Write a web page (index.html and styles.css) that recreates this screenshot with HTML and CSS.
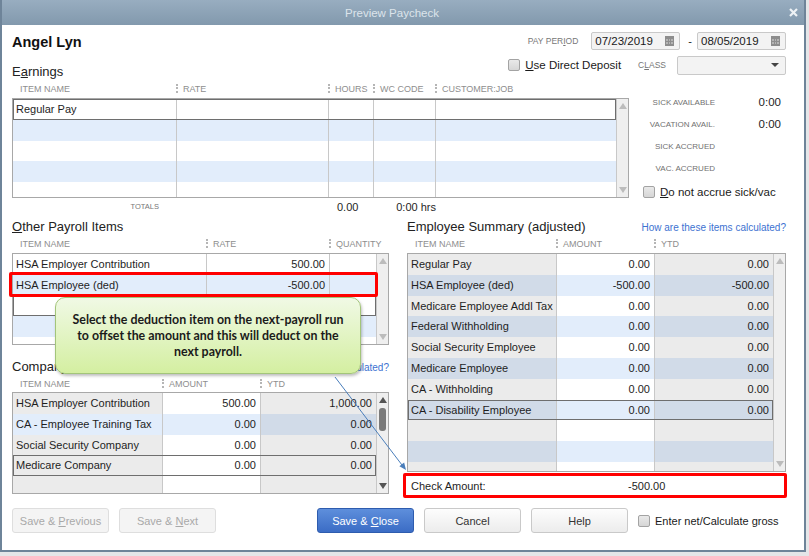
FILE: index.html
```html
<!DOCTYPE html>
<html lang="en">

<head>
  <meta charset="UTF-8" />
  <meta name="viewport" content="width=device-width, initial-scale=1.0" />
  <title>Preview Paycheck</title>
  <link rel="stylesheet" href="styles.css">
</head>

<body>
  <div class="window">
    <div class="titlebar">
      <span class="title">Preview Paycheck</span>
      <span class="close">
        <svg width="9" height="9" viewBox="0 0 9 9"><path d="M1 1L8 8M8 1L1 8" stroke="#eef2f5" stroke-width="2.2" /></svg>
      </span>
    </div>

    <div class="content">
      <div class="top">
        <div class="top-left">
          <div class="name">Angel Lyn</div>
          <div class="section-title">E<u>a</u>rnings</div>
        </div>
        <div class="top-right">
          <div class="period-row">
            <span class="label period-label">PAY PER<u>I</u>OD</span>
            <span class="date">07/23/2019
              <svg class="cal" width="9" height="10" viewBox="0 0 9 10"><rect width="9" height="10" fill="#8d8d8d" /><path d="M1 3h2v2H1zM4 3h1v2H4zM6 3h2v2H6zM1 6h2v2H1zM4 6h1v2H4zM6 6h2v2H6z" fill="#b4b4b4" /></svg>
            </span>
            <span class="dash">-</span>
            <span class="date">08/05/2019
              <svg class="cal" width="9" height="10" viewBox="0 0 9 10"><rect width="9" height="10" fill="#8d8d8d" /><path d="M1 3h2v2H1zM4 3h1v2H4zM6 3h2v2H6zM1 6h2v2H1zM4 6h1v2H4zM6 6h2v2H6z" fill="#b4b4b4" /></svg>
            </span>
          </div>
          <div class="deposit-row">
            <span class="check"><i class="box"></i><span><u>U</u>se Direct Deposit</span></span>
            <span class="label class-label">C<u>L</u>ASS</span>
            <span class="select"><i class="caret"></i></span>
          </div>
        </div>
      </div>

      <div class="earnings">
        <div>
          <div class="heads earn-cols">
            <span>ITEM NAME</span><span>RATE</span><span>HOURS</span><span>WC CODE</span><span>CUSTOMER:JOB</span>
          </div>
          <div class="table earn-table">
            <div class="rows">
              <div class="row earn-cols sel"><span>Regular Pay</span><span></span><span></span><span></span><span></span></div>
              <div class="row earn-cols alt"><span></span><span></span><span></span><span></span><span></span></div>
              <div class="row earn-cols"><span></span><span></span><span></span><span></span><span></span></div>
              <div class="row earn-cols alt"><span></span><span></span><span></span><span></span><span></span></div>
              <div class="row earn-cols"><span></span><span></span><span></span><span></span><span></span></div>
            </div>
            <div class="scroll"><i class="up"></i><i class="down"></i></div>
          </div>
          <div class="totals earn-cols">
            <span class="totals-label">TOTALS</span><span></span><span class="total-hours">0.00</span><span class="total-time">0:00 hrs</span><span></span>
          </div>
        </div>

        <div class="accrual">
          <div class="accrual-row"><span class="label">SICK AVAILABLE</span><span class="value">0:00</span></div>
          <div class="accrual-row"><span class="label">VACATION AVAIL.</span><span class="value">0:00</span></div>
          <div class="accrual-row"><span class="label">SICK ACCRUED</span><span class="value"></span></div>
          <div class="accrual-row"><span class="label">VAC. ACCRUED</span><span class="value"></span></div>
          <span class="check accrue"><i class="box"></i><span><u>D</u>o not accrue sick/vac</span></span>
        </div>
      </div>

      <div class="middle">
        <div>
          <div class="panel other">
            <div class="panel-title"><span class="section-title"><u>O</u>ther Payroll Items</span></div>
            <div class="heads other-cols">
              <span>ITEM NAME</span><span>RATE</span><span>QUANTITY</span>
            </div>
            <div class="table other-table">
              <div class="rows">
                <div class="row other-cols"><span>HSA Employer Contribution</span><span class="num">500.00</span><span></span></div>
                <div class="row other-cols alt"><span>HSA Employee (ded)</span><span class="num">-500.00</span><span></span></div>
                <div class="row other-cols sel"><span></span><span></span><span></span></div>
                <div class="row other-cols alt"><span></span><span></span><span></span></div>
                <div class="row other-cols"><span></span><span></span><span></span></div>
              </div>
              <div class="scroll"><i class="up"></i><i class="down"></i></div>
            </div>
          </div>

          <div class="panel company">
            <div class="panel-title">
              <span class="section-title">Company Summary (adjusted)</span>
              <span class="link">How are these items calculated?</span>
            </div>
            <div class="heads sum-cols">
              <span>ITEM NAME</span><span>AMOUNT</span><span>YTD</span>
            </div>
            <div class="table summary company-table">
              <div class="rows">
                <div class="row sum-cols"><span>HSA Employer Contribution</span><span class="num">500.00</span><span class="num">1,000.00</span></div>
                <div class="row sum-cols alt light"><span>CA - Employee Training Tax</span><span class="num">0.00</span><span class="num">0.00</span></div>
                <div class="row sum-cols"><span>Social Security Company</span><span class="num">0.00</span><span class="num">0.00</span></div>
                <div class="row sum-cols sel"><span>Medicare Company</span><span class="num">0.00</span><span class="num">0.00</span></div>
                <div class="row sum-cols"><span></span><span></span><span></span></div>
              </div>
              <div class="scroll dark"><i class="up"></i><i class="thumb"></i><i class="down"></i></div>
            </div>
          </div>
        </div>

        <div class="panel employee">
          <div class="panel-title">
            <span class="section-title">Employee Summary (adjusted)</span>
            <span class="link">How are these items calculated?</span>
          </div>
          <div class="heads emp-cols">
            <span>ITEM NAME</span><span>AMOUNT</span><span>YTD</span>
          </div>
          <div class="table summary employee-table">
            <div class="rows">
              <div class="row emp-cols"><span>Regular Pay</span><span class="num">0.00</span><span class="num">0.00</span></div>
              <div class="row emp-cols alt"><span>HSA Employee (ded)</span><span class="num">-500.00</span><span class="num">-500.00</span></div>
              <div class="row emp-cols"><span>Medicare Employee Addl Tax</span><span class="num">0.00</span><span class="num">0.00</span></div>
              <div class="row emp-cols alt"><span>Federal Withholding</span><span class="num">0.00</span><span class="num">0.00</span></div>
              <div class="row emp-cols"><span>Social Security Employee</span><span class="num">0.00</span><span class="num">0.00</span></div>
              <div class="row emp-cols alt"><span>Medicare Employee</span><span class="num">0.00</span><span class="num">0.00</span></div>
              <div class="row emp-cols"><span>CA - Withholding</span><span class="num">0.00</span><span class="num">0.00</span></div>
              <div class="row emp-cols alt sel"><span>CA - Disability Employee</span><span class="num">0.00</span><span class="num">0.00</span></div>
              <div class="row emp-cols"><span></span><span></span><span></span></div>
              <div class="row emp-cols alt"><span></span><span></span><span></span></div>
              <div class="row emp-cols"><span></span><span></span><span></span></div>
            </div>
            <div class="scroll"><i class="up"></i><i class="down"></i></div>
          </div>
          <div class="check-amount"><span>Check Amount:</span><span>-500.00</span></div>
        </div>
      </div>

      <div class="buttons">
        <span class="btn disabled"><span>Save &amp; <u>P</u>revious</span></span>
        <span class="btn disabled"><span>Save &amp; <u>N</u>ext</span></span>
        <span class="btn primary"><span>Save &amp; <u>C</u>lose</span></span>
        <span class="btn"><span>Cancel</span></span>
        <span class="btn"><span>Help</span></span>
        <span class="check"><i class="box"></i><span>Enter net/Calculate <u>g</u>ross</span></span>
      </div>
    </div>

    <!-- annotation overlays -->
    <div class="highlight"></div>
    <div class="callout">Select the deduction item on the next-payroll run<br>to offset the amount and this will deduct on the<br>next payroll.</div>
    <svg class="pointer" width="809" height="556" viewBox="0 0 809 556">
      <line x1="335" y1="377" x2="402" y2="465" stroke="#4a7ebb" stroke-width="1" />
      <polygon points="406,470 404.1,462.6 399.4,466.3" fill="#4a7ebb" />
    </svg>
  </div>
</body>

</html>
```

FILE: styles.css
```css
body {
  margin: 0;
  background: #e4e6e8;
  font-family: "Liberation Sans", Arial, sans-serif;
  font-size: 11px;
  color: #1e1e1e;
}

u {
  text-decoration-thickness: 1px;
}

.window {
  position: relative;
  width: 806px;
  height: 552px;
  box-sizing: border-box;
  background: #fff;
  border: 2px solid #6e8499;
  border-top: none;
}

.titlebar {
  height: 25px;
  display: flex;
  align-items: center;
  background: linear-gradient(#98adc0, #8299ad);
  color: #dce4eb;
  font-size: 11.5px;
}

.title {
  flex: 1;
  text-align: center;
}

.close {
  width: 22px;
  display: flex;
  justify-content: center;
}

.content {
  padding: 6px 18px 0 10px;
}

/* header */
.top {
  display: flex;
  justify-content: space-between;
  height: 49px;
}

.top-left {
  display: flex;
  flex-direction: column;
  justify-content: space-between;
}

.name {
  margin-top: 2px;
  font-size: 14.5px;
  font-weight: bold;
  line-height: 18px;
  color: #111;
}

.section-title {
  font-size: 13px;
  line-height: 16px;
  color: #222;
}

.top-right {
  display: flex;
  flex-direction: column;
  align-items: flex-end;
  gap: 5px;
}

.period-row,
.deposit-row {
  display: flex;
  align-items: center;
}

.period-row {
  height: 19px;
}

.deposit-row {
  height: 20px;
}

.label {
  font-size: 8.5px;
  color: #777;
}

.period-label {
  margin-right: 13px;
}

.date {
  width: 89px;
  height: 18px;
  box-sizing: border-box;
  padding: 0 5px 0 3px;
  display: flex;
  align-items: center;
  justify-content: space-between;
  border: 1px solid #c9c9c9;
  border-radius: 2px;
  background: #f3f3f3;
  font-size: 11.5px;
  color: #1a1a1a;
}

.dash {
  margin: 0 5px 0 8px;
  font-size: 11px;
}

.check {
  display: flex;
  align-items: center;
  font-size: 11.5px;
  color: #1a1a1a;
}

.box {
  width: 10px;
  height: 10px;
  margin-right: 5px;
  border: 1px solid #a3a3a3;
  border-radius: 2px;
  background: linear-gradient(#e9e9e9, #d6d6d6);
}

.class-label {
  margin-left: 17px;
}

.select {
  width: 109px;
  height: 19px;
  box-sizing: border-box;
  margin-left: 11px;
  display: flex;
  align-items: center;
  justify-content: flex-end;
  padding-right: 6px;
  border: 1px solid #c9c9c9;
  border-radius: 2px;
  background: #f3f3f3;
}

.caret {
  border-top: 4px solid #444;
  border-left: 4px solid transparent;
  border-right: 4px solid transparent;
}

/* tables */
.earnings {
  display: grid;
  grid-template-columns: 617px 1fr;
  column-gap: 14px;
}

.heads {
  display: grid;
  align-items: center;
  height: 18px;
  padding-left: 1px;
  font-size: 9px;
  color: #8e8e8e;
  white-space: nowrap;
}

.heads span:first-child {
  padding-left: 7px;
}

.heads span + span::before {
  content: '';
  display: inline-block;
  height: 9px;
  margin: 0 5px 0 -1px;
  border-left: 2px dotted #b5b5b5;
  vertical-align: -1px;
}

.earn-cols {
  grid-template-columns: 164px 152px 45px 62px 1fr;
}

.other-cols {
  grid-template-columns: 194px 123px 1fr;
}

.sum-cols {
  grid-template-columns: 150px 98px 1fr;
}

.emp-cols {
  grid-template-columns: 149px 98px 1fr;
}

.table {
  display: flex;
  box-sizing: border-box;
  border: 1px solid #a8a8a8;
  overflow: hidden;
}

.earn-table {
  height: 100px;
}

.other-table {
  height: 92px;
}

.company-table {
  height: 102px;
}

.employee-table {
  height: 219px;
}

.rows {
  flex: 1;
}

.row {
  position: relative;
  display: grid;
  height: 20.8px;
  line-height: 20.8px;
}

.row span {
  padding: 0 4px 0 3px;
  border-right: 1px solid #c8c8c8;
  white-space: nowrap;
  overflow: hidden;
}

.row span:last-child {
  border-right: none;
}

.row.alt {
  background: #e2edfb;
}

.row.sel::after {
  content: '';
  position: absolute;
  inset: 0;
  border: 1px solid #6e6e6e;
}

.num {
  text-align: right;
}

.summary .row span {
  background: #ebebeb;
}

.summary .row span:nth-child(2) {
  background: #fff;
}

.summary .row.alt span {
  background: #d1dbe8;
}

.summary .row.alt span:nth-child(2),
.summary .row.light span:first-child {
  background: #e2edfb;
}

.scroll {
  width: 12px;
  display: flex;
  flex-direction: column;
  align-items: center;
  padding: 4px 0;
  box-sizing: border-box;
  border-left: 1px solid #c8c8c8;
  background: #efefef;
}

.up,
.down {
  border-left: 4px solid transparent;
  border-right: 4px solid transparent;
}

.up {
  border-bottom: 6px solid #bcbcbc;
}

.down {
  margin-top: auto;
  border-top: 6px solid #bcbcbc;
}

.scroll.dark .up {
  border-bottom-color: #555;
}

.scroll.dark .down {
  border-top-color: #555;
}

.thumb {
  width: 7px;
  height: 23px;
  margin-top: 5px;
  border-radius: 3px;
  background: #7b7b7b;
}

.totals {
  display: grid;
  height: 18px;
  line-height: 18px;
  padding-left: 1px;
  white-space: nowrap;
}

.totals-label {
  padding-right: 18px;
  text-align: right;
  font-size: 7.5px;
  color: #777;
}

.total-hours {
  padding-left: 8px;
}

.total-time {
  text-align: right;
}

.accrual {
  padding-top: 11px;
}

.accrual-row {
  display: grid;
  grid-template-columns: 72px 66px;
  align-items: center;
  height: 22px;
}

.accrual-row .label {
  text-align: right;
  font-size: 8px;
  color: #707070;
}

.accrual-row .value {
  text-align: right;
  font-size: 11.5px;
}

.accrue {
  height: 14px;
  margin-top: 6px;
}

/* summaries */
.middle {
  display: grid;
  grid-template-columns: 377px 379px;
  column-gap: 18px;
}

.panel-title {
  display: flex;
  justify-content: space-between;
  align-items: baseline;
  height: 16px;
  margin-top: 3px;
}

.company .panel-title {
  margin-top: 14px;
}

.company .heads {
  height: 17px;
}

.link {
  font-size: 10px;
  color: #3d72d1;
}

.check-amount {
  display: grid;
  grid-template-columns: 217px auto;
  align-items: center;
  height: 25px;
  box-sizing: border-box;
  margin: 1px -1px 0 -4px;
  padding-left: 5px;
  border: 3px solid #f00;
  border-radius: 2px;
  background: #fff;
}

/* buttons */
.buttons {
  display: flex;
  align-items: center;
  margin-top: 10px;
}

.btn {
  width: 97px;
  height: 25px;
  box-sizing: border-box;
  margin-right: 10px;
  display: flex;
  align-items: center;
  justify-content: center;
  border: 1px solid #c9c9c9;
  border-radius: 3px;
  background: linear-gradient(#fdfdfd, #ececec);
  color: #333;
}

.btn.disabled {
  border-color: #dedede;
  background: #f4f4f4;
  color: #a9a9a9;
}

.btn.primary {
  margin-left: 91px;
  border-color: #2e5cae;
  background: linear-gradient(#5e8fdc, #3b6cc5);
  color: #fff;
}

.buttons .check {
  font-size: 11px;
}

/* annotations */
.highlight {
  position: absolute;
  left: 7px;
  top: 272px;
  width: 369px;
  height: 25px;
  box-sizing: border-box;
  border: 3px solid #f00;
  border-radius: 2px;
}

.callout {
  position: absolute;
  left: 53px;
  top: 297px;
  width: 306px;
  height: 77px;
  box-sizing: border-box;
  display: flex;
  align-items: center;
  justify-content: center;
  border: 1px solid #a3c57a;
  border-radius: 10px;
  background: linear-gradient(#f0f9e5, #d4efa1);
  box-shadow: 1px 2px 3px rgba(0, 0, 0, 0.25);
  font-family: Lato, "Liberation Sans", sans-serif;
  font-weight: bold;
  font-size: 12.4px;
  line-height: 16px;
  text-align: center;
  color: #1b1b1b;
}

.pointer {
  position: absolute;
  left: -2px;
  top: 0;
  pointer-events: none;
}
```
